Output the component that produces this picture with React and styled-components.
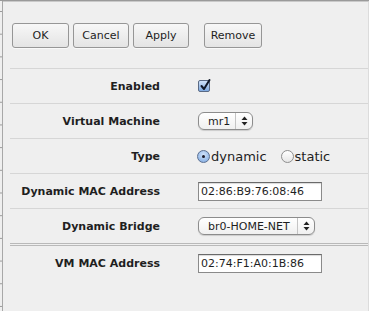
import React from 'react';
import styled, { createGlobalStyle } from 'styled-components';

const GlobalStyle = createGlobalStyle`
  html, body {
    margin: 0;
    padding: 0;
    background: #efefef;
  }
  body {
    font-family: "DejaVu Sans", Verdana, sans-serif;
  }
`;

const Page = styled.div`
  width: 369px;
  height: 311px;
  display: flex;
  box-sizing: border-box;
  border-top: 1px solid #9a9a9a;
  background: #efefef;
  overflow: hidden;
`;

const Gutter = styled.div`
  width: 2px;
  flex: none;
  border-right: 1px solid #a8a8a8;
  background: linear-gradient(to bottom, #9a9a9a 0, #9a9a9a 1px, transparent 1px);
  background-size: 2px 22.7px;
  background-position: 0 10px;
`;

const Panel = styled.div`
  flex: 1;
  display: flex;
  flex-direction: column;
  padding-top: 21px;
  border-top: 1px solid #c9c9c9;
  border-right: 1px solid #dcdcdc;
`;

const Toolbar = styled.div`
  display: flex;
  align-items: center;
  gap: 4px;
  padding-left: 9px;
  margin-bottom: 20px;
`;

const Button = styled.button`
  height: 25px;
  width: ${p => p.$w}px;
  margin-left: ${p => p.$gap || 0}px;
  padding: 0;
  border: 1px solid #969696;
  border-radius: 3px;
  background: linear-gradient(#f7f7f7, #e4e4e4);
  box-shadow: 0 1px 0 rgba(255, 255, 255, 0.6);
  font-family: "DejaVu Sans", Verdana, sans-serif;
  font-size: 11px;
  color: #1e1e1e;
`;

const Form = styled.div`
  margin-left: 7px;
  display: flex;
  flex-direction: column;
`;

const Row = styled.div`
  display: grid;
  grid-template-columns: 150px 1fr;
  column-gap: 38px;
  align-items: center;
  height: 34px;
  border-top: ${p => (p.$double ? '3px double #b9b9b9' : '1px solid #d6d6d6')};
`;

const Label = styled.div`
  text-align: right;
  font-weight: bold;
  font-size: 11px;
  color: #1f1f1f;
`;

const Value = styled.div`
  display: flex;
  align-items: center;
`;

const Check = styled.span`
  width: 12px;
  height: 12px;
  box-sizing: border-box;
  border: 1px solid #5a6a84;
  border-radius: 2px;
  background: linear-gradient(#cfe2fa, #7ea9e0);
  position: relative;
  display: inline-block;

  svg {
    position: absolute;
    left: 0px;
    top: -3px;
  }
`;

const Select = styled.div`
  width: ${p => p.$w}px;
  height: 18px;
  box-sizing: border-box;
  border: 1px solid #8c8c8c;
  border-radius: 6px;
  background: linear-gradient(#ffffff, #f0f0f0);
  box-shadow: 0 1px 1px rgba(0, 0, 0, 0.15);
  display: flex;
  align-items: stretch;
  font-size: 11px;
  color: #1e1e1e;
`;

const SelectText = styled.span`
  flex: 1;
  display: flex;
  align-items: center;
  padding-left: 9px;
`;

const SelectArrows = styled.span`
  width: 16px;
  border-left: 1px solid #c4c4c4;
  display: flex;
  align-items: center;
  justify-content: center;
`;

const RadioItem = styled.label`
  display: flex;
  align-items: center;
  font-size: 13px;
  color: #1e1e1e;
  margin-right: ${p => p.$mr || 0}px;
`;

const RadioDot = styled.span`
  width: 13px;
  height: 13px;
  box-sizing: border-box;
  border-radius: 50%;
  border: 1px solid ${p => (p.$on ? '#5b6f91' : '#8e8e8e')};
  background: ${p =>
    p.$on ? 'radial-gradient(circle at 50% 35%, #d2e4fb, #7aa6df)' : 'linear-gradient(#ffffff, #e6e6e6)'};
  display: inline-flex;
  align-items: center;
  justify-content: center;
  margin-left: -1px;
  margin-right: 1px;

  &::after {
    content: '';
    display: ${p => (p.$on ? 'block' : 'none')};
    width: 3px;
    height: 3px;
    border-radius: 50%;
    background: #1a1a2a;
  }
`;

const TextInput = styled.div`
  width: 124px;
  height: 19px;
  box-sizing: border-box;
  border: 1px solid #8a8a8a;
  border-top-color: #6a6a6a;
  background: #fff;
  box-shadow: inset 0 1px 1px rgba(0, 0, 0, 0.15);
  display: flex;
  align-items: center;
  padding-left: 2px;
  font-size: 11px;
  color: #1e1e1e;
`;

const Arrows = () => (
  <svg width="7" height="10" viewBox="0 0 7 10">
    <path d="M3.5 0.5 L6.5 4 L0.5 4 Z" fill="#222" />
    <path d="M3.5 9.5 L6.5 6 L0.5 6 Z" fill="#222" />
  </svg>
);

export default function App() {
  return (
    <>
      <GlobalStyle />
      <Page>
        <Gutter />
        <Panel>
          <Toolbar>
            <Button $w={57}>OK</Button>
            <Button $w={56}>Cancel</Button>
            <Button $w={56}>Apply</Button>
            <Button $w={58} $gap={11}>Remove</Button>
          </Toolbar>
          <Form>
            <Row>
              <Label>Enabled</Label>
              <Value>
                <Check>
                  <svg width="13" height="14" viewBox="0 0 13 14">
                    <path d="M2.5 8 L5 11 L10.5 2" fill="none" stroke="#101828" strokeWidth="2" strokeLinecap="round" strokeLinejoin="round" />
                  </svg>
                </Check>
              </Value>
            </Row>
            <Row>
              <Label>Virtual Machine</Label>
              <Value>
                <Select $w={55}>
                  <SelectText>mr1</SelectText>
                  <SelectArrows><Arrows /></SelectArrows>
                </Select>
              </Value>
            </Row>
            <Row>
              <Label>Type</Label>
              <Value>
                <RadioItem $mr={15}>
                  <RadioDot $on />dynamic
                </RadioItem>
                <RadioItem>
                  <RadioDot />static
                </RadioItem>
              </Value>
            </Row>
            <Row>
              <Label>Dynamic MAC Address</Label>
              <Value>
                <TextInput>02:86:B9:76:08:46</TextInput>
              </Value>
            </Row>
            <Row>
              <Label>Dynamic Bridge</Label>
              <Value>
                <Select $w={117}>
                  <SelectText>br0-HOME-NET</SelectText>
                  <SelectArrows><Arrows /></SelectArrows>
                </Select>
              </Value>
            </Row>
            <Row $double>
              <Label>VM MAC Address</Label>
              <Value>
                <TextInput>02:74:F1:A0:1B:86</TextInput>
              </Value>
            </Row>
          </Form>
        </Panel>
      </Page>
    </>
  );
}
